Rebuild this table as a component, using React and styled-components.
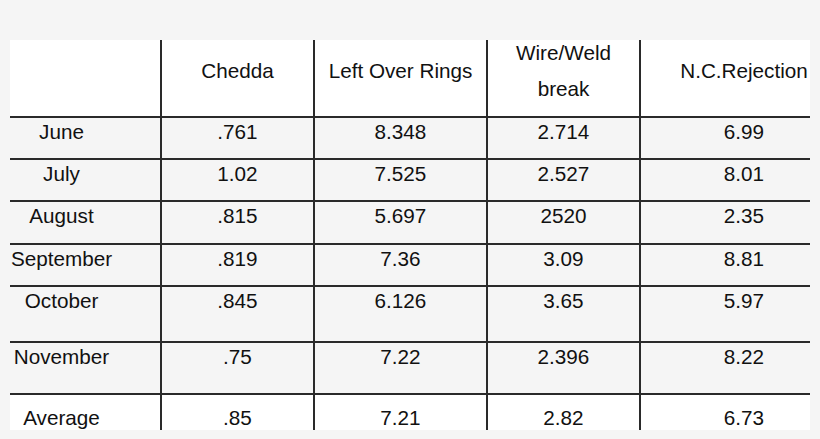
import React from 'react'
import styled, { createGlobalStyle } from 'styled-components'

const GlobalStyle = createGlobalStyle`
  html, body {
    margin: 0;
    padding: 0;
    background: #f5f5f5;
  }
  body {
    font-family: "Liberation Sans", Arial, sans-serif;
    color: #111;
  }
`

const Page = styled.div`
  width: 820px;
  height: 439px;
  padding: 40px 10px 0;
  box-sizing: border-box;
  overflow: hidden;
`

const Sheet = styled.table`
  width: 800px;
  table-layout: fixed;
  border-collapse: collapse;
  font-size: 20.7px;
  line-height: 24px;
`

const HeadRow = styled.tr`
  height: 77px;
  background: #fff;
`

const HeadCell = styled.th`
  padding: 0;
  font-weight: normal;
  vertical-align: top;
  text-align: center;
  white-space: nowrap;
  & + & {
    border-left: 2px solid #2a2a2a;
  }
  &:last-child {
    padding-left: 37px;
  }
`

const HeadText = styled.div`
  line-height: 36px;
  margin-top: ${p => (p.$lines === 2 ? '-5px' : '13px')};
`

const Row = styled.tr`
  height: ${p => p.$h}px;
  background: ${p => (p.$total ? '#fff' : '#f5f5f5')};
`

const Cell = styled.td`
  padding: ${p => (p.$total ? '11px' : '2px')} 0 0;
  vertical-align: top;
  text-align: center;
  white-space: nowrap;
  border-top: 2px solid #2a2a2a;
  & + & {
    border-left: 2px solid #2a2a2a;
  }
  &:first-child {
    padding-right: 47px;
  }
  &:last-child {
    padding-left: 37px;
  }
`

const widths = [151, 153, 173, 153, 170]

const rows = [
  { month: 'June', h: 42, values: ['.761', '8.348', '2.714', '6.99'] },
  { month: 'July', h: 42, values: ['1.02', '7.525', '2.527', '8.01'] },
  { month: 'August', h: 43, values: ['.815', '5.697', '2520', '2.35'] },
  { month: 'September', h: 42, values: ['.819', '7.36', '3.09', '8.81'] },
  { month: 'October', h: 56, values: ['.845', '6.126', '3.65', '5.97'] },
  { month: 'November', h: 52, values: ['.75', '7.22', '2.396', '8.22'] },
  { month: 'Average', h: 34, values: ['.85', '7.21', '2.82', '6.73'], total: true },
]

export default function App() {
  return (
    <Page>
      <GlobalStyle />
      <Sheet>
        <colgroup>
          {widths.map((w, i) => (
            <col key={i} style={{ width: w }} />
          ))}
        </colgroup>
        <thead>
          <HeadRow>
            <HeadCell />
            <HeadCell><HeadText>Chedda</HeadText></HeadCell>
            <HeadCell><HeadText>Left Over Rings</HeadText></HeadCell>
            <HeadCell><HeadText $lines={2}>Wire/Weld<br />break</HeadText></HeadCell>
            <HeadCell><HeadText>N.C.Rejection</HeadText></HeadCell>
          </HeadRow>
        </thead>
        <tbody>
          {rows.map(r => (
            <Row key={r.month} $h={r.h} $total={r.total}>
              <Cell $total={r.total}>{r.month}</Cell>
              {r.values.map((v, i) => (
                <Cell key={i} $total={r.total}>{v}</Cell>
              ))}
            </Row>
          ))}
        </tbody>
      </Sheet>
    </Page>
  )
}
